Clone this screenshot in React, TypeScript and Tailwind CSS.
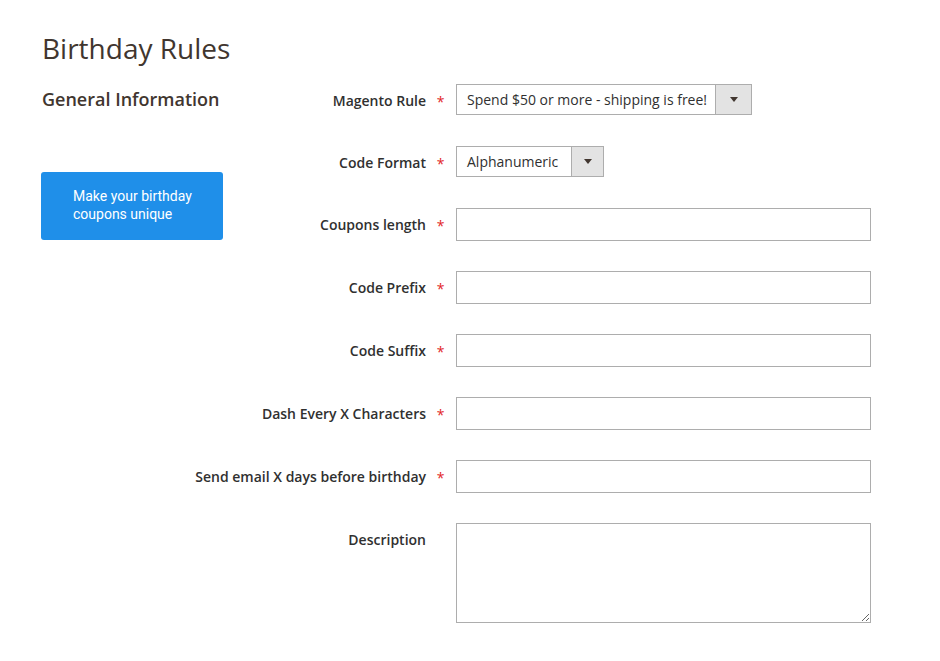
import React from 'react';

type Field = {
  label: string;
  required?: boolean;
  kind: 'select' | 'input' | 'textarea';
  value?: string;
  width?: string;
  arrow?: string;
  mt: string;
};

function Arrow() {
  return (
    <svg width="8" height="5" viewBox="0 0 8 5" className="block">
      <path d="M0 0 L8 0 L4 5 Z" fill="#41362f" />
    </svg>
  );
}

function SelectBox({ value, width, arrow }: { value: string; width: string; arrow: string }) {
  return (
    <div className={`flex h-[31px] border border-[#adadad] bg-white ${width}`}>
      <div className="flex flex-1 items-center pl-[10px] text-[14px] text-[#303030]">{value}</div>
      <div className={`flex shrink-0 items-center justify-center border-l border-[#adadad] bg-[#e3e3e3] ${arrow}`}>
        <Arrow />
      </div>
    </div>
  );
}

const fields: Field[] = [
  { label: 'Magento Rule', required: true, kind: 'select', value: 'Spend $50 or more - shipping is free!', width: 'w-[296px]', arrow: 'w-[36px]', mt: 'mt-0' },
  { label: 'Code Format', required: true, kind: 'select', value: 'Alphanumeric', width: 'w-[148px]', arrow: 'w-[32px]', mt: 'mt-[31px]' },
  { label: 'Coupons length', required: true, kind: 'input', mt: 'mt-[31px]' },
  { label: 'Code Prefix', required: true, kind: 'input', mt: 'mt-[30px]' },
  { label: 'Code Suffix', required: true, kind: 'input', mt: 'mt-[30px]' },
  { label: 'Dash Every X Characters', required: true, kind: 'input', mt: 'mt-[30px]' },
  { label: 'Send email X days before birthday', required: true, kind: 'input', mt: 'mt-[30px]' },
  { label: 'Description', kind: 'textarea', mt: 'mt-[30px]' },
];

export default function App() {
  return (
    <div className="min-h-[661px] bg-white pl-[42px] font-['Open_Sans',sans-serif] text-[#303030]">
      <h1 className="pt-[30px] text-[28px] leading-[36px] font-normal text-[#41362f]">Birthday Rules</h1>
      <div className="mt-[18px] flex">
        <aside className="w-[186px] shrink-0">
          <h2 className="pt-[3px] text-[18px] leading-[24px] font-semibold whitespace-nowrap text-[#41362f]">
            General Information
          </h2>
          <div className="mt-[61px] -ml-px flex h-[68px] w-[182px] items-center rounded-[3px] bg-[#1f8fe9] pb-[2px] pl-[32px] font-['Roboto',sans-serif] text-[14px] leading-[18px] text-white">
            Make your birthday
            <br />
            coupons unique
          </div>
        </aside>
        <form className="flex flex-col">
          {fields.map((f) => (
            <div key={f.label} className={`flex items-start ${f.mt}`}>
              <label className="flex w-[198px] justify-end whitespace-nowrap pt-[8px] text-[14px] leading-[18px] font-semibold text-[#303030]">
                {f.label}
              </label>
              <span className="w-[29px] pt-[9px] text-center text-[14px] leading-[18px] text-[#e22626]">
                {f.required ? '*' : ''}
              </span>
              <div className="ml-px">
                {f.kind === 'select' && <SelectBox value={f.value!} width={f.width!} arrow={f.arrow!} />}
                {f.kind === 'input' && (
                  <input className="block h-[33px] w-[415px] border border-[#adadad] bg-white px-[10px] text-[14px] outline-none" />
                )}
                {f.kind === 'textarea' && (
                  <textarea className="block h-[100px] w-[415px] border border-[#adadad] bg-white px-[10px] text-[14px] outline-none" />
                )}
              </div>
            </div>
          ))}
        </form>
      </div>
    </div>
  );
}
